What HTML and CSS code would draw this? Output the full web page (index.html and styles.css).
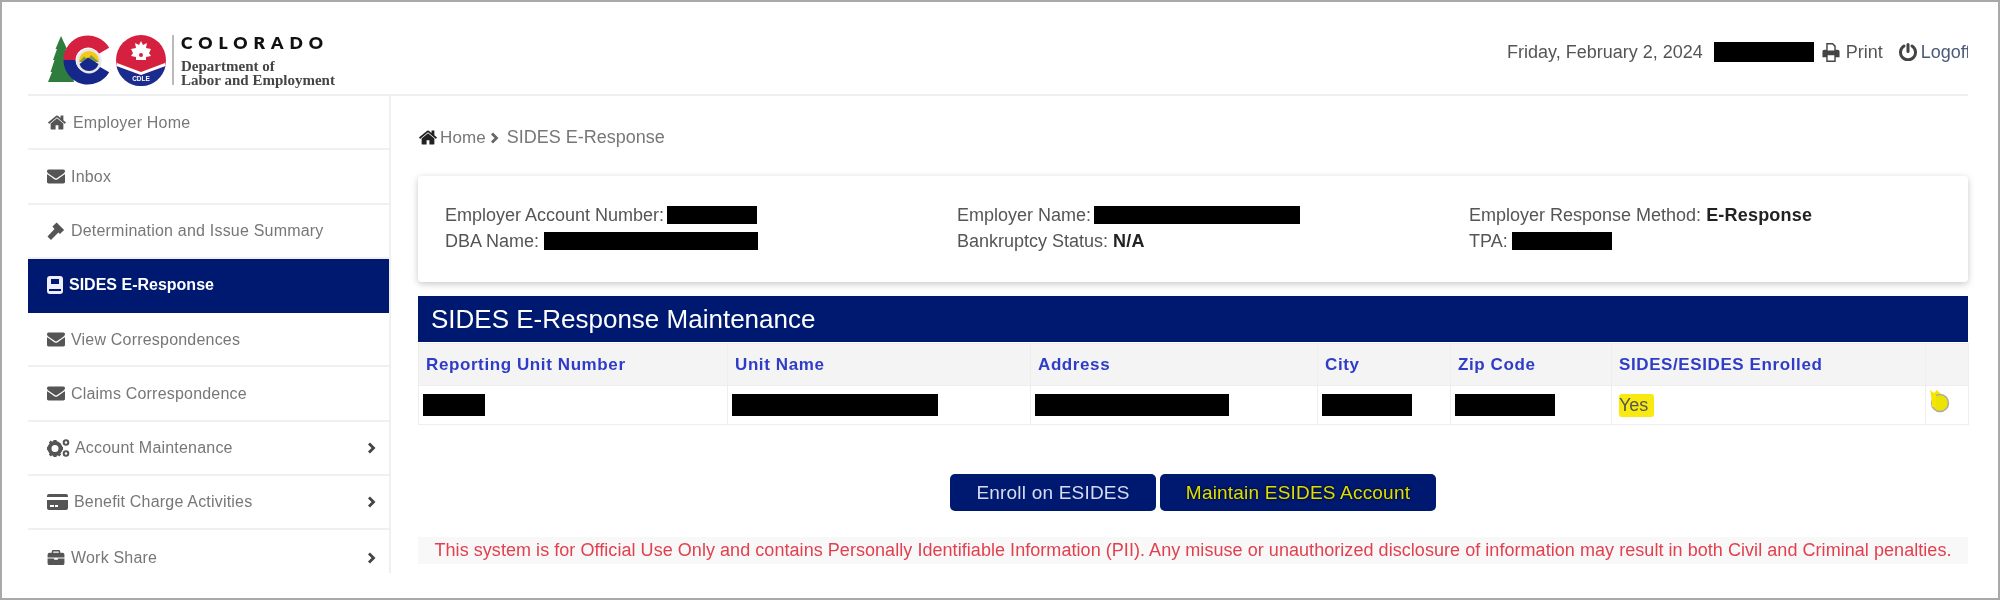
FILE: index.html
```html
<!DOCTYPE html>
<html lang="en">
<head>
<meta charset="utf-8">
<title>SIDES E-Response Maintenance</title>
<link rel="stylesheet" href="styles.css">
</head>
<body>
<svg class="defs" width="0" height="0" aria-hidden="true">
  <symbol id="i-home" viewBox="0 128 1792 1536"><path d="M1472 992v480q0 26-19 45t-45 19h-384v-384h-256v384h-384q-26 0-45-19t-19-45v-480q0-1 .5-3t.5-3l575-474 575 474q1 2 1 6zm223-69l-62 74q-8 9-21 11h-3q-13 0-21-7l-692-577-692 577q-12 8-24 7-13-2-21-11l-62-74q-8-10-7-23.500t11-21.500l719-599q32-26 76-26t76 26l244 204v-195q0-14 9-23t23-9h192q14 0 23 9t9 23v408l219 182q10 8 11 21.500t-7 23.500z"/></symbol>
  <symbol id="i-env" viewBox="0 256 1792 1408"><path d="M1792 710v794q0 66-47 113t-113 47h-1472q-66 0-113-47t-47-113v-794q44 49 101 87 362 246 497 345 57 42 92.500 65.500t94.500 48 110 24.500h2q51 0 110-24.500t94.500-48 92.500-65.500q170-123 498-345 57-39 100-87zm0-294q0 79-49 151t-122 123q-376 261-468 325-10 7-42.500 30.500t-54 38-52 32.500-57.500 27-50 9h-2q-23 0-50-9t-57.500-27-52-32.500-54-38-42.500-30.500q-91-64-262-182.500t-205-142.500q-62-42-117-115.500t-55-136.500q0-78 41.500-130t118.500-52h1472q65 0 112.500 47t47.500 113z"/></symbol>
  <symbol id="i-gavel" viewBox="0 0 18 18"><path d="M9.600.4l7.500 7.500-4.200 4.200-1.500-1.500L4 18 .5 14.500 7.500 7 5.400 4.600z"/></symbol>
  <symbol id="i-book" viewBox="0 0 16 18"><path fill-rule="evenodd" d="M3 0h10a3 3 0 0 1 3 3v12a3 3 0 0 1-3 3H3a3 3 0 0 1-3-3V3a3 3 0 0 1 3-3zm1 3v5h8V3zM2 13v2h12v-2z"/></symbol>
  <symbol id="i-cogs" viewBox="0 0 23 18"><circle class="hole" cx="8" cy="9.500" r="5.500" fill="none" stroke="currentColor" stroke-width="4"/><path d="M6.500 1h3l.5 3h-4zM6.500 18h3l.5-3h-4zM0 8v3l3 .5v-4zM16 8v3l-3 .5v-4zM1.800 3.500l2-2 2 2-2 2zM12.200 3.500l2 2-2 2-2-2zM1.800 15.500l2 2 2-2-2-2zM14.200 15.500l-2 2-2-2 2-2z"/><circle cx="19" cy="3.500" r="2.300" fill="none" stroke="currentColor" stroke-width="2"/><circle cx="19" cy="14.500" r="2.300" fill="none" stroke="currentColor" stroke-width="2"/></symbol>
  <symbol id="i-card" viewBox="0 0 21 16"><path fill-rule="evenodd" d="M2 0h17a2 2 0 0 1 2 2v1H0V2a2 2 0 0 1 2-2zM0 6h21v8a2 2 0 0 1-2 2H2a2 2 0 0 1-2-2zm3 5v2h4v-2zm5 0v2h3v-2z"/></symbol>
  <symbol id="i-case" viewBox="0 0 18 16"><path fill-rule="evenodd" d="M6 0h6a1.500 1.500 0 0 1 1.500 1.500V3H16a2 2 0 0 1 2 2v3H0V5a2 2 0 0 1 2-2h2.500V1.500A1.500 1.500 0 0 1 6 0zm0 1.500V3h6V1.500zM0 9h7v1.500h4V9h7v5a2 2 0 0 1-2 2H2a2 2 0 0 1-2-2z"/></symbol>
  <symbol id="i-print" viewBox="0 0 18 20"><path fill-rule="evenodd" d="M4 0h7l3 3v4h2a2 2 0 0 1 2 2v6h-4v5H4v-5H0V9a2 2 0 0 1 2-2h2zm1.500 1.500V8h7V4L10.500 1.500zM5.500 13v5.500h7V13z"/></symbol>
  <symbol id="i-power" viewBox="0 0 18 18"><path d="M9 0a1.500 1.500 0 0 1 1.500 1.500v7a1.500 1.500 0 0 1-3 0v-7A1.500 1.500 0 0 1 9 0z"/><path d="M5 3a7.500 7.500 0 1 0 8 0" fill="none" stroke="currentColor" stroke-width="3" stroke-linecap="round"/></symbol>
  <symbol id="i-chev" viewBox="0 0 9 12"><path d="M2 1.500L6.500 6 2 10.500" fill="none" stroke="currentColor" stroke-width="2.800"/></symbol>
</svg>

<div class="frame">
  <header class="topbar">
    <div class="brand">
      <svg class="logo" viewBox="47 34 127 52" aria-hidden="true">
        <path d="M61 36l6 13-1.500 0 5 13-1.500 0 5 20-26 0 4-10-1.500 0 4-12-1.500 0 4-11-1.500 0z" fill="#2f7d3c"/>
        <path d="M104 50.750A18.500 18.500 0 0 0 69.500 60" fill="none" stroke="#d5203f" stroke-width="12"/>
        <path d="M69.500 60A18.500 18.500 0 0 0 104 69.250" fill="none" stroke="#16278c" stroke-width="12"/>
        <circle cx="89" cy="61" r="12.500" fill="#e8e8e8"/>
        <path d="M79 61a10 10 0 0 1 20 0z" fill="#f5c916"/>
        <path d="M79 62l5-5.500 4 3 3-4.500 8 7z" fill="#7c9c46"/>
        <path d="M79.500 64l8.500-6.500 10.500 6.500a10 10 0 0 1-19 0z" fill="#16278c"/>
        <circle cx="141" cy="60" r="25" fill="#d5203f"/>
        <path d="M116.500 66l24.500 9 24.500-9A25 25 0 0 1 116.500 66z" fill="#1a2c8e"/>
        <path d="M117 63l24 9 24-9 .5 3-24.500 9-24.500-9z" fill="#fff"/>
        <path d="M141 41l2 4 4-2-1 5 5 1-2 4 2 3-5 1v3h-10v-3l-5-1 2-3-2-4 5-1-1-5 4 2z" fill="#fff"/>
        <circle cx="141" cy="55" r="2" fill="#d5203f"/>
        <text x="141" y="81" class="seal-text" text-anchor="middle">CDLE</text>
        <path d="M173 35v50" stroke="#777" stroke-width="1"/>
      </svg>
      <div class="brand-text">
        <div class="state">COLORADO</div>
        <div class="dept">Department of</div>
        <div class="dept">Labor and Employment</div>
      </div>
    </div>
    <div class="userbar">
      <span class="soft">Friday, February 2, 2024</span>
      <span class="redact r-user"></span>
      <svg class="ico ico-print"><use href="#i-print"/></svg>
      <span class="soft link-print">Print</span>
      <svg class="ico ico-power"><use href="#i-power"/></svg>
      <span class="soft link-logoff">Logoff</span>
    </div>
  </header>

  <div class="body">
    <nav class="side">
      <a class="item"><svg class="ico i-20"><use href="#i-home"/></svg><span class="label gap-6">Employer Home</span></a>
      <a class="item"><svg class="ico i-18"><use href="#i-env"/></svg><span class="label gap-6">Inbox</span></a>
      <a class="item"><svg class="ico i-gav"><use href="#i-gavel"/></svg><span class="label gap-6">Determination and Issue Summary</span></a>
      <a class="item active"><svg class="ico i-16"><use href="#i-book"/></svg><span class="label gap-6">SIDES E-Response</span></a>
      <a class="item"><svg class="ico i-18"><use href="#i-env"/></svg><span class="label gap-6">View Correspondences</span></a>
      <a class="item"><svg class="ico i-18"><use href="#i-env"/></svg><span class="label gap-6">Claims Correspondence</span></a>
      <a class="item"><svg class="ico i-23"><use href="#i-cogs"/></svg><span class="label gap-5">Account Maintenance</span><svg class="chev"><use href="#i-chev"/></svg></a>
      <a class="item"><svg class="ico i-21"><use href="#i-card"/></svg><span class="label gap-6">Benefit Charge Activities</span><svg class="chev"><use href="#i-chev"/></svg></a>
      <a class="item"><svg class="ico i-18"><use href="#i-case"/></svg><span class="label gap-6">Work Share</span><svg class="chev"><use href="#i-chev"/></svg></a>
    </nav>

    <main class="content">
      <div class="crumbs">
        <svg class="ico crumb-home"><use href="#i-home"/></svg>
        <span class="crumb-link">Home</span>
        <svg class="crumb-chev"><use href="#i-chev"/></svg>
        <span class="crumb-now">SIDES E-Response</span>
      </div>

      <section class="card">
        <div class="line"><span class="soft">Employer Account Number:</span><span class="redact r-acct"></span></div>
        <div class="line"><span class="soft">Employer Name:</span><span class="redact r-name"></span></div>
        <div class="line"><span class="soft">Employer Response Method: </span><b class="strong">E-Response</b></div>
        <div class="line"><span class="soft">DBA Name:</span><span class="redact r-dba"></span></div>
        <div class="line"><span class="soft">Bankruptcy Status: </span><b class="strong">N/A</b></div>
        <div class="line"><span class="soft">TPA:</span><span class="redact r-tpa"></span></div>
      </section>

      <h1 class="title"><span class="title-text">SIDES E-Response Maintenance</span></h1>
      <table class="grid">
        <colgroup>
          <col class="c1"><col class="c2"><col class="c3"><col class="c4"><col class="c5"><col class="c6"><col class="c7">
        </colgroup>
        <thead>
          <tr>
            <th><span class="th-text">Reporting Unit Number</span></th>
            <th><span class="th-text">Unit Name</span></th>
            <th><span class="th-text">Address</span></th>
            <th><span class="th-text">City</span></th>
            <th><span class="th-text">Zip Code</span></th>
            <th><span class="th-text">SIDES/ESIDES Enrolled</span></th>
            <th></th>
          </tr>
        </thead>
        <tbody>
          <tr>
            <td><span class="redact tall r-c1"></span></td>
            <td><span class="redact tall r-c2"></span></td>
            <td><span class="redact tall r-c3"></span></td>
            <td><span class="redact tall r-c4"></span></td>
            <td><span class="redact tall r-c5"></span></td>
            <td><mark class="yes">Yes</mark></td>
            <td><svg class="mark-ico" viewBox="0 0 20 23" aria-hidden="true"><path d="M0 0l4 3 3-3 3 3 1 5H2z" fill="#f5e500"/><circle cx="10" cy="13" r="8.500" fill="#ece400" stroke="#aaa" stroke-width="1.500"/><path d="M1 3h5v14H2z" fill="#f5e500"/></svg></td>
          </tr>
        </tbody>
      </table>

      <div class="actions">
        <button class="btn btn-enroll" type="button"><span class="btn-text">Enroll on ESIDES</span></button>
        <button class="btn btn-maintain" type="button"><span class="btn-text">Maintain ESIDES Account</span></button>
      </div>

      <p class="notice"><span class="notice-text">This system is for Official Use Only and contains Personally Identifiable Information (PII). Any misuse or unauthorized disclosure of information may result in both Civil and Criminal penalties.</span></p>
    </main>
  </div>
</div>
</body>
</html>
```

FILE: styles.css
```css
* { box-sizing: border-box; }
html, body { margin: 0; padding: 0; background: #fff; }
body { font-family: "Liberation Sans", Arial, sans-serif; color: #555; }
.defs { position: absolute; }

.frame {
  width: 2000px;
  height: 600px;
  border: 2px solid #a9a9a9;
  padding: 0 30px 0 26px;
  overflow: hidden;
  display: flex;
  flex-direction: column;
}

/* header */
.topbar {
  height: 94px;
  flex: none;
  border-bottom: 2px solid #efefef;
  display: flex;
  justify-content: space-between;
  align-items: flex-start;
  overflow: hidden;
}
.brand { display: flex; padding: 32px 0 0 19px; filter: blur(.6px); }
.logo { width: 127px; height: 52px; flex: none; }
.seal-text { font: 700 6.500px "Liberation Sans", sans-serif; fill: #fff; }
.brand-text { margin-left: 7px; color: #444; }
.state {
  font: 800 17.500px/18px "Lato", sans-serif;
  letter-spacing: 6px;
  color: #111;
  margin-bottom: 8px;
}
.dept { font: 700 15px/13.500px "Liberation Serif", serif; color: #444; white-space: nowrap; }

.userbar {
  display: flex;
  align-items: center;
  height: 20px;
  margin-top: 40px;
  font-size: 18px;
  color: #555;
  white-space: nowrap;
  width: 461px;
  overflow: hidden;
  flex: none;
}
.soft { filter: blur(.6px); }
.ico { fill: currentColor; color: #444; flex: none; filter: blur(.4px); }
.r-user { margin-left: 11px; width: 100px; height: 20px; }
.ico-print { width: 18px; height: 19px; margin-left: 8px; }
.link-print { margin-left: 6px; width: 37px; }
.ico-power { width: 18px; height: 18px; margin-left: 16px; }
.link-logoff { margin-left: 4px; color: #4a5a78; }

.redact { display: inline-block; background: #000; vertical-align: top; flex: none; }

/* body */
.body { flex: 1; min-height: 0; display: flex; margin-bottom: 25px; }
.side {
  width: 363px;
  flex: none;
  border-right: 2px solid #f0f0f0;
  overflow: hidden;
}
.item {
  height: 54.250px;
  padding: 1px 13px 0 19px;
  display: flex;
  align-items: center;
  border-bottom: 2px solid #f0f0f0;
  color: #777;
  font-size: 16px;
  letter-spacing: .2px;
}
.item .ico { color: #555; }
.item:last-child { border-bottom: 0; }
.item.active { background: #001970; color: #fff; font-weight: 700; letter-spacing: 0; border-bottom-color: #001970; }
.item.active .ico { color: #eef; }
.label { filter: blur(.6px); flex: 1; white-space: nowrap; }
.gap-6 { margin-left: 6px; }
.gap-5 { margin-left: 5px; }
.i-16 { width: 16px; height: 18px; }
.i-18 { width: 18px; height: 15px; }
.i-gav { width: 18px; height: 18px; }
.i-20 { width: 20px; height: 17px; }
.i-21 { width: 21px; height: 16px; }
.i-23 { width: 23px; height: 18px; }
.chev { width: 9px; height: 12px; color: #444; flex: none; filter: blur(.3px); }

/* content */
.content { flex: 1; min-width: 0; padding-left: 27px; }
.crumbs { height: 80px; display: flex; align-items: center; padding-top: 3px; font-size: 17px; color: #777; }
.crumb-home { width: 20px; height: 17px; color: #222; }
.crumb-link { margin-left: 2px; letter-spacing: .1px; filter: blur(.6px); }
.crumb-chev { width: 9px; height: 12px; margin-left: 4px; color: #666; }
.crumb-now { margin-left: 8px; font-size: 18px; filter: blur(.6px); }

.card {
  height: 106px;
  padding: 26px 0 0 27px;
  background: #fff;
  border-radius: 4px;
  box-shadow: 0 2px 7px rgba(0, 0, 0, .22);
  display: grid;
  grid-template-columns: 512px 512px 1fr;
  grid-auto-rows: 26px;
  font-size: 18px;
  color: #555;
}
.line { display: flex; align-items: center; white-space: pre; }
.strong { color: #222; filter: blur(.4px); font-weight: 700; letter-spacing: .2px; }
.redact.r-acct { width: 90px; height: 18px; margin-left: 3px; }
.redact.r-name { width: 206px; height: 18px; margin-left: 3px; }
.redact.r-dba { width: 214px; height: 18px; margin-left: 5px; }
.redact.r-tpa { width: 100px; height: 18px; margin-left: 4px; }

.title {
  margin: 14px 0 0;
  height: 46px;
  padding-left: 13px;
  background: #001970;
  color: #fff;
  font-weight: 400;
  font-size: 26px;
  line-height: 46px;
}
.title-text { display: inline-block; filter: blur(.6px); }

.grid {
  margin-top: 1px;
  width: 1550px;
  table-layout: fixed;
  border-collapse: collapse;
}
.c1 { width: 309px; } .c2 { width: 303px; } .c3 { width: 287px; } .c4 { width: 133px; }
.c5 { width: 161px; } .c6 { width: 314px; } .c7 { width: 43px; }
th, td { border: 1px solid #eeeeee; padding: 0; text-align: left; }
th {
  height: 42px;
  background: #f4f4f4;
  padding-left: 7px;
  font-size: 17px;
  color: #2f3cc8;
  letter-spacing: .6px;
}
.th-text { display: inline-block; filter: blur(.6px); }
td { height: 39px; padding-left: 4px; vertical-align: top; padding-top: 8px; }
.redact.tall { height: 22px; display: block; }
.r-c1 { width: 62px; }
.r-c2 { width: 206px; }
.r-c3 { width: 194px; }
.r-c4 { width: 90px; }
.r-c5 { width: 100px; }
.yes {
  display: block;
  width: 35px;
  height: 23px;
  margin: 0 0 0 3px;
  background: #f8ea10;
  color: #555;
  font-size: 18px;
  line-height: 23px;
  border-radius: 3px;
  filter: blur(.5px);
}
.mark-ico { display: block; width: 20px; height: 23px; margin-top: -4px; filter: blur(.4px); }

.actions { margin-top: 49px; display: flex; justify-content: center; gap: 4px; }
.btn {
  height: 37px;
  padding: 0;
  border: 0;
  border-radius: 5px;
  background: #001970;
  font: 19px "Liberation Sans", sans-serif;
  color: #d8dcf0;
  letter-spacing: .2px;
}
.btn-enroll { width: 206px; }
.btn-maintain { width: 276px; color: #dede00; text-shadow: 0 0 3px #000; }
.btn-text { display: inline-block; filter: blur(.6px); }

.notice {
  margin: 26px 0 0;
  height: 27px;
  background: #f8f8f8;
  text-align: center;
  font-size: 18px;
  letter-spacing: .05px;
  line-height: 27px;
  color: #e2404f;
  white-space: nowrap;
}
.notice-text { display: inline-block; filter: blur(.6px); }
```
